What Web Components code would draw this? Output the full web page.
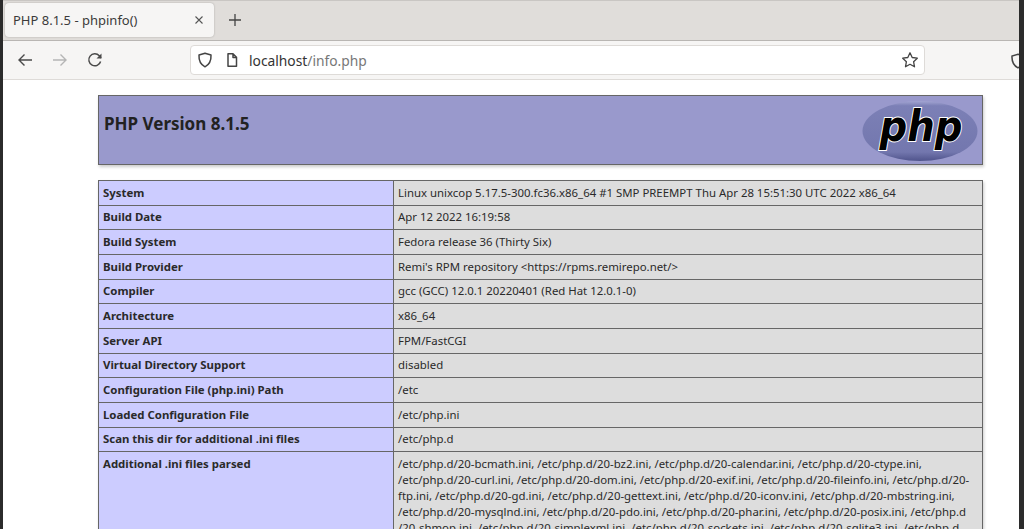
<!DOCTYPE html>
<html>
<head>
<meta charset="utf-8">
<title>PHP 8.1.5 - phpinfo()</title>
<style>
html, body { margin: 0; padding: 0; height: 100%; overflow: hidden; background: #fff; }
</style>
</head>
<body>

<template id="browser-tpl">
  <style>
    :host { display: flex; flex-direction: column; height: 529px; width: 1024px; overflow: hidden; font-family: "Noto Sans", sans-serif; box-sizing: border-box; border-left: 3px solid #2b2b2b; border-right: 5px solid #2b2b2b; background: #fff; }
    .tabs { display: flex; align-items: center; gap: 14px; height: 41px; padding: 0 0 1px 2px; box-sizing: border-box; background: #e0ddda; border-top: 1px solid #c9c6c3; border-bottom: 1px solid #b9b6b3; flex: none; }
    .tab { display: flex; align-items: center; justify-content: space-between; width: 209px; height: 34px; box-sizing: border-box; padding: 0 10px 0 8px; background: #f6f5f4; border-radius: 4px; box-shadow: 0 0 2px rgba(0,0,0,.25); color: #3b3b3b; font-size: 13px; }
    .nav { display: flex; align-items: center; height: 39px; box-sizing: border-box; background: #f6f5f4; border-bottom: 1px solid #dedbd8; flex: none; padding-left: 14px; position: relative; overflow: hidden; }
    .nav svg { flex: none; display: block; }
    .btns { display: flex; gap: 19px; align-items: center; }
    .url { display: flex; align-items: center; width: 735px; height: 30px; margin-left: 87px; box-sizing: border-box; background: #fff; border: 1px solid #dedbd8; border-radius: 4px; padding: 0 5px 0 6px; font-size: 13.800px; color: #333; }
    .url b { font-weight: 400; color: #333; margin-left: 10px; }
    .url i { font-style: normal; color: #777; }
    .url .star { margin-left: auto; }
    .ext { position: absolute; right: -7px; top: 12px; }
    .page { flex: 1; overflow: hidden; background: #fff; }
  </style>
  <div class="tabs">
    <div class="tab"><span><slot name="title"></slot></span>
      <svg width="10" height="10" viewBox="0 0 10 10"><path d="M1.500 1.500l7 7M8.500 1.500l-7 7" stroke="#555" stroke-width="1.100" fill="none"/></svg>
    </div>
    <svg width="14" height="14" viewBox="0 0 14 14"><path d="M7 1v12M1 7h12" stroke="#444" stroke-width="1.300" fill="none"/></svg>
  </div>
  <div class="nav">
    <div class="btns">
      <svg width="16" height="16" viewBox="0 0 16 16"><path d="M15 8H2M7.500 2.500L2 8l5.500 5.500" stroke="#4a4a4a" stroke-width="1.400" fill="none"/></svg>
      <svg width="16" height="16" viewBox="0 0 16 16"><path d="M1 8h13M8.500 2.500L14 8l-5.500 5.500" stroke="#b5b5b5" stroke-width="1.400" fill="none"/></svg>
      <svg width="16" height="16" viewBox="0 0 16 16"><path d="M13.600 9.500A6 6 0 1 1 12.300 3.800L14 6" stroke="#4a4a4a" stroke-width="1.500" fill="none"/><path d="M14.500 1.500v5h-5z" fill="#4a4a4a"/></svg>
    </div>
    <div class="url">
      <svg width="16" height="16" viewBox="0 0 16 16"><path d="M8 1.200L14 3c.3 5.500-1.500 9.500-6 11.800C3.500 12.500 1.700 8.500 2 3z" stroke="#444" stroke-width="1.500" fill="none" stroke-linejoin="round"/></svg>
      <svg width="14" height="16" viewBox="0 0 14 16" style="margin-left:12px"><path d="M3 1.800h5l3.500 3.500v8.900H3zM8 1.800v3.700h3.500" stroke="#444" stroke-width="1.500" fill="none" stroke-linejoin="round"/></svg>
      <b>localhost<i>/info.php</i></b>
      <svg class="star" width="18" height="18" viewBox="0 0 18 18"><path d="M9 1.800l2.200 4.700 5.100.7-3.700 3.500.9 5.100L9 13.300l-4.500 2.500.9-5.100-3.700-3.500 5.100-.7z" stroke="#444" stroke-width="1.300" fill="none" stroke-linejoin="round"/></svg>
    </div>
    <svg class="ext" width="16" height="16" viewBox="0 0 16 16"><path d="M8 1.200L14 3c.3 5.500-1.500 9.500-6 11.800C3.500 12.500 1.700 8.500 2 3z" stroke="#444" stroke-width="1.500" fill="none"/></svg>
  </div>
  <div class="page"><slot></slot></div>
</template>

<template id="info-page-tpl">
  <style>
    :host { display: block; width: 885px; margin: 15px 0 0 95px; font-family: "Noto Sans", sans-serif; }
    .rows { display: block; margin-top: 15px; border-top: 1px solid #666; border-left: 1px solid #666; border-right: 1px solid #666; box-shadow: 1px 2px 3px #ccc; }
  </style>
  <slot name="header"></slot>
  <div class="rows"><slot></slot></div>
</template>

<template id="info-header-tpl">
  <style>
    :host { display: flex; justify-content: space-between; height: 70px; box-sizing: border-box; background: #9999cc; border: 1px solid #666; box-shadow: 1px 2px 3px #ccc; color: #222; }
    h1 { margin: 17px 0 0 5px; font-size: 17px; font-weight: 700; line-height: 22px; }
    svg { display: block; margin: 4px 4px 0 0; }
  </style>
  <h1><slot></slot></h1>
  <svg width="116" height="62" viewBox="0 0 116 62">
    <defs>
      <linearGradient id="oval" x1="0" y1="0" x2="0" y2="1">
        <stop offset="0" stop-color="#a3a5d2"/><stop offset=".08" stop-color="#7c80b6"/><stop offset=".85" stop-color="#7377ae"/><stop offset="1" stop-color="#50548c"/>
      </linearGradient>
    </defs>
    <ellipse cx="58" cy="31" rx="57.500" ry="30" fill="url(#oval)"/>
    <text x="59" y="41" text-anchor="middle" font-family="'DejaVu Sans',sans-serif" font-style="italic" font-weight="700" font-size="42" textLength="83" lengthAdjust="spacingAndGlyphs" fill="#000" stroke="#fff" stroke-width="2" paint-order="stroke">php</text>
  </svg>
</template>

<template id="info-row-tpl">
  <style>
    :host { display: grid; grid-template-columns: 295px 1fr; border-bottom: 1px solid #666; font-size: 11.400px; line-height: 16px; color: #2a2a2a; }
    .k { background: #ccccff; padding: 3.830px 5px 3.830px 4px; font-weight: 700; border-right: 1px solid #666; }
    .v { background: #dddddd; padding: 3.830px 5px 3.830px 4px; }
  </style>
  <div class="k"><slot name="key"></slot></div>
  <div class="v"><slot></slot></div>
</template>

<browser-frame>
  <span slot="title">PHP 8.1.5 - phpinfo()</span>
  <info-page>
    <info-header slot="header">PHP Version 8.1.5</info-header>
    <info-row><span slot="key">System</span>Linux unixcop 5.17.5-300.fc36.x86_64 #1 SMP PREEMPT Thu Apr 28 15:51:30 UTC 2022 x86_64</info-row>
    <info-row><span slot="key">Build Date</span>Apr 12 2022 16:19:58</info-row>
    <info-row><span slot="key">Build System</span>Fedora release 36 (Thirty Six)</info-row>
    <info-row><span slot="key">Build Provider</span>Remi's RPM repository &lt;https://rpms.remirepo.net/&gt;</info-row>
    <info-row><span slot="key">Compiler</span>gcc (GCC) 12.0.1 20220401 (Red Hat 12.0.1-0)</info-row>
    <info-row><span slot="key">Architecture</span>x86_64</info-row>
    <info-row><span slot="key">Server API</span>FPM/FastCGI</info-row>
    <info-row><span slot="key">Virtual Directory Support</span>disabled</info-row>
    <info-row><span slot="key">Configuration File (php.ini) Path</span>/etc</info-row>
    <info-row><span slot="key">Loaded Configuration File</span>/etc/php.ini</info-row>
    <info-row><span slot="key">Scan this dir for additional .ini files</span>/etc/php.d</info-row>
    <info-row><span slot="key">Additional .ini files parsed</span>/etc/php.d/20-bcmath.ini, /etc/php.d/20-bz2.ini, /etc/php.d/20-calendar.ini, /etc/php.d/20-ctype.ini, /etc/php.d/20-curl.ini, /etc/php.d/20-dom.ini, /etc/php.d/20-exif.ini, /etc/php.d/20-fileinfo.ini, /etc/php.d/20-ftp.ini, /etc/php.d/20-gd.ini, /etc/php.d/20-gettext.ini, /etc/php.d/20-iconv.ini, /etc/php.d/20-mbstring.ini, /etc/php.d/20-mysqlnd.ini, /etc/php.d/20-pdo.ini, /etc/php.d/20-phar.ini, /etc/php.d/20-posix.ini, /etc/php.d<wbr>/20-shmop.ini, /etc/php.d/20-simplexml.ini, /etc/php.d/20-sockets.ini, /etc/php.d/20-sqlite3.ini, /etc/php.d<wbr>/20-sysvmsg.ini</info-row>
  </info-page>
</browser-frame>

<script>
(function () {
    function define(name, tpl) {
        customElements.define(name, class extends HTMLElement {
            constructor() {
                super();
                this._shadowRoot_ = this.attachShadow({ mode: 'open' });
                this._shadowRoot_.appendChild(document.getElementById(tpl).content.cloneNode(true));
            }
        });
    }
    define('browser-frame', 'browser-tpl');
    define('info-page', 'info-page-tpl');
    define('info-header', 'info-header-tpl');
    define('info-row', 'info-row-tpl');
}());
</script>
</body>
</html>
